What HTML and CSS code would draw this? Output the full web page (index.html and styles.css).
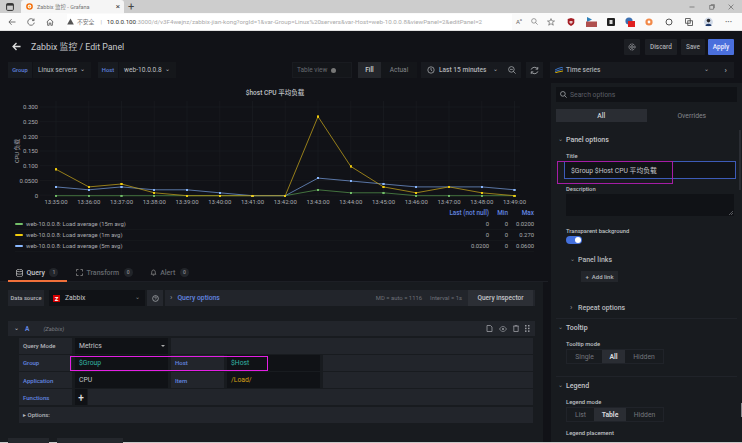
FILE: index.html
```html
<!DOCTYPE html>
<html lang="zh">
<head>
<meta charset="utf-8">
<title>Zabbix 监控 - Grafana</title>
<link rel="stylesheet" href="styles.css">
</head>
<body>
<div class="tabstrip">
  <svg class="winicon" width="8" height="8" viewBox="0 0 8 8"><rect x=".6" y=".6" width="6.8" height="6.8" rx="1" fill="none" stroke="#333" stroke-width="1"/><rect x=".6" y=".6" width="6.8" height="2" fill="#333"/></svg>
  <div class="tab">
    <svg width="7" height="7" viewBox="0 0 8 8"><circle cx="4" cy="4" r="3" fill="none" stroke="#f46800" stroke-width="1.6"/><circle cx="4" cy="4" r="1" fill="#fbb03b"/></svg>
    <span class="tabtitle">Zabbix 监控 - Grafana</span>
    <span class="tabclose">×</span>
  </div>
  <span class="tabplus">+</span>
  <div class="winctl">
    <svg width="6" height="6" viewBox="0 0 6 6"><path d="M.5 3h5" stroke="#666" stroke-width=".7"/></svg>
    <svg width="6" height="6" viewBox="0 0 6 6"><rect x=".8" y="1.500" width="3.700" height="3.700" fill="none" stroke="#666" stroke-width=".7"/><path d="M1.800.6H5.400V4.200" fill="none" stroke="#666" stroke-width=".7"/></svg>
    <svg width="6" height="6" viewBox="0 0 6 6"><path d="M.6.6l4.800 4.800M5.400.6L.6 5.400" stroke="#666" stroke-width=".7"/></svg>
  </div>
</div>
<div class="addr">
  <svg width="8" height="8" viewBox="0 0 8 8" class="navico"><path d="M7.5 4H1M3.6 1.2L.9 4l2.7 2.8" fill="none" stroke="#555" stroke-width=".8"/></svg>
  <svg width="8" height="8" viewBox="0 0 8 8" class="navico"><path d="M6.9 2.3A3.3 3.3 0 1 0 7.3 4.6M7 .6v2H5" fill="none" stroke="#555" stroke-width=".8"/></svg>
  <svg width="8" height="8" viewBox="0 0 8 8" class="navico"><path d="M.7 4L4 1l3.3 3M1.6 3.5V7.3H3.2V5H4.8V7.3H6.4V3.5" fill="none" stroke="#555" stroke-width=".8"/></svg>
  <div class="urlbar">
    <svg width="7" height="7" viewBox="0 0 8 8"><path d="M4 .5L7.8 7.5H.2z" fill="#555"/></svg>
    <span class="insecure">不安全</span><span class="sep">|</span>
    <span class="url"><b>10.0.0.100</b>:3000/d/v3F4wejnz/zabbix-jian-kong?orgId=1&amp;var-Group=Linux%20servers&amp;var-Host=web-10.0.0.8&amp;viewPanel=2&amp;editPanel=2</span>
  </div>
  <div class="exts">
    <span class="ext-t">A<sup>a</sup></span>
    <svg width="7" height="7" viewBox="0 0 8 8"><circle cx="3.3" cy="3.3" r="2.6" fill="none" stroke="#666" stroke-width=".7"/><path d="M5.2 5.2L7.6 7.6" stroke="#666" stroke-width=".7"/></svg>
    <svg width="8" height="8" viewBox="0 0 8 8"><path d="M4 .6L5 3h2.5L5.5 4.6l.8 2.6L4 5.7 1.7 7.2l.8-2.6L.5 3H3z" fill="none" stroke="#666" stroke-width=".7"/></svg>
    <svg width="8" height="8" viewBox="0 0 8 8"><path d="M.7 1L4 0l3.3 1v3.3C7.3 6 5.6 7.4 4 8 2.4 7.4.7 6 .7 4.3z" fill="#a41d24"/><path d="M2.500 3h3v1.500L4 6 2.500 4.500z" fill="#e8c7c7"/></svg>
    <svg width="11" height="10" viewBox="0 0 11 10"><path d="M1 0L6 2.500 1 5z" fill="#2d7fb8"/><rect x="0" y="4.500" width="11" height="5.500" fill="#b0504f"/></svg>
    <svg width="8" height="8" viewBox="0 0 8 8"><rect width="8" height="8" rx="1" fill="#222"/><rect x="2.5" y="2" width="3" height="4" fill="#ddd"/></svg>
    <svg width="10" height="10" viewBox="0 0 10 10"><circle cx="4" cy="4" r="3.6" fill="#3c6fb0"/><rect x="3" y="4" width="7" height="6" fill="#e02020"/></svg>
    <svg width="8" height="8" viewBox="0 0 8 8"><circle cx="4" cy="4" r="3.6" fill="#f28a4a"/><circle cx="4" cy="4" r="1.4" fill="#fff"/></svg>
    <svg width="8" height="8" viewBox="0 0 8 8"><circle cx="4" cy="4" r="3" fill="none" stroke="#444" stroke-width=".9"/></svg>
    <svg width="8" height="8" viewBox="0 0 8 8"><rect x=".6" y=".6" width="4.6" height="4.6" fill="none" stroke="#444" stroke-width=".8"/><rect x="2.8" y="2.8" width="4.6" height="4.6" fill="none" stroke="#444" stroke-width=".8"/></svg>
    <svg width="9" height="10" viewBox="0 0 9 10"><circle cx="4.5" cy="5" r="4.4" fill="#cfd8e6"/><circle cx="4.5" cy="3.6" r="1.8" fill="#2a2a2e"/><path d="M1.5 9c0-3 6-3 6 0z" fill="#1f3a6b"/></svg>
    <span class="ext-t dots">···</span>
  </div>
</div>

<div class="app">
  <header class="nav">
    <svg class="back" width="9" height="9" viewBox="0 0 10 10"><path d="M9.5 5H1.5M5 1.2L1.2 5 5 8.8" fill="none" stroke="#ddd" stroke-width="1.5"/></svg>
    <h1 class="pagetitle">Zabbix 监控 / Edit Panel</h1>
    <div class="navbtns">
      <button class="btn btn-ico"><svg width="8" height="8" viewBox="0 0 8 8"><circle cx="4" cy="4" r="1.3" fill="none" stroke="#b5b7bc" stroke-width=".7"/><circle cx="4" cy="4" r="3" fill="none" stroke="#b5b7bc" stroke-width=".9" stroke-dasharray="1.2 .7"/></svg></button>
      <button class="btn btn-discard">Discard</button>
      <button class="btn btn-save">Save</button>
      <button class="btn btn-apply">Apply</button>
    </div>
  </header>

  <div class="toolbar">
    <span class="varlabel vl-group">Group</span>
    <span class="varval vv-group">Linux servers <i class="chev">⌄</i></span>
    <span class="varlabel vl-host">Host</span>
    <span class="varval vv-host">web-10.0.0.8 <i class="chev">⌄</i></span>
    <div class="tableview">Table view <i class="knob"></i></div>
    <div class="fillgroup"><span class="fill">Fill</span><span class="actual">Actual</span></div>
    <div class="timepick">
      <svg width="8" height="8" viewBox="0 0 8 8"><circle cx="4" cy="4" r="3.2" fill="none" stroke="#b5b7bc" stroke-width=".7"/><path d="M4 2v2l1.3 1" fill="none" stroke="#b5b7bc" stroke-width=".7"/></svg>
      <span class="timetext">Last 15 minutes</span><i class="chev">⌄</i>
      <svg class="zoomout" width="8" height="8" viewBox="0 0 8 8"><circle cx="3.4" cy="3.4" r="2.8" fill="none" stroke="#b5b7bc" stroke-width=".7"/><path d="M5.4 5.4L7.6 7.6M2 3.4h2.8" stroke="#b5b7bc" stroke-width=".7"/></svg>
    </div>
    <div class="refresh"><svg width="9" height="9" viewBox="0 0 8 8"><path d="M1 3.2A3.2 3.2 0 0 1 6.7 2.6M7 4.8A3.2 3.2 0 0 1 1.3 5.4M6.9 .9v1.9H5M1.1 7.1V5.2H3" fill="none" stroke="#b5b7bc" stroke-width=".7"/></svg></div>
    <div class="vizpick">
      <svg width="8" height="6" viewBox="0 0 8 6"><path d="M0 3l3-1.5L8 0M0 4.5l3-1L8 2" fill="none" stroke="#3f7fd9" stroke-width=".9"/><path d="M0 6l3-1 5-1" fill="none" stroke="#e0b400" stroke-width=".9"/></svg>
      <span class="viztext">Time series</span><i class="chev vizchev">⌄</i><span class="vizarrow">›</span>
    </div>
  </div>

  <div class="body">
    <main class="left">
      <section class="chart">
        <h2 class="charttitle">$host CPU 平均负载</h2>
        <svg class="plot" width="546" height="112" viewBox="0 97 546 112">
          <defs>
            <marker id="mg" markerWidth="2.400" markerHeight="2.400" refX="1.200" refY="1.200" markerUnits="userSpaceOnUse"><rect width="2.400" height="2.400" fill="#73bf69"/></marker>
            <marker id="my" markerWidth="2.400" markerHeight="2.400" refX="1.200" refY="1.200" markerUnits="userSpaceOnUse"><rect width="2.400" height="2.400" fill="#f2cc0c"/></marker>
            <marker id="mb" markerWidth="2.400" markerHeight="2.400" refX="1.200" refY="1.200" markerUnits="userSpaceOnUse"><rect width="2.400" height="2.400" fill="#8ab8ff"/></marker>
          </defs>
          <g class="grid">
            <path d="M40 107H520M40 121.7H520M40 136.4H520M40 151H520M40 165.7H520M40 180.4H520M40 195.1H520"/>
            <path d="M56 101V196M88.75 101V196M121.5 101V196M154.25 101V196M187 101V196M219.75 101V196M252.5 101V196M285.25 101V196M318 101V196M350.75 101V196M383.5 101V196M416.25 101V196M449 101V196M481.75 101V196M514.5 101V196"/>
          </g>
          <g class="ylab">
            <text x="38" y="109">0.300</text><text x="38" y="124">0.250</text><text x="38" y="138.5">0.200</text><text x="38" y="153">0.150</text><text x="38" y="168">0.100</text><text x="38" y="182.7">0.0500</text><text x="38" y="197.5">0</text>
          </g>
          <text class="ytitle" transform="translate(19 151) rotate(-90)">CPU 负载</text>
          <g class="xlab">
            <text x="56" y="204">13:35:00</text><text x="88.75" y="204">13:36:00</text><text x="121.5" y="204">13:37:00</text><text x="154.25" y="204">13:38:00</text><text x="187" y="204">13:39:00</text><text x="219.75" y="204">13:40:00</text><text x="252.5" y="204">13:41:00</text><text x="285.25" y="204">13:42:00</text><text x="318" y="204">13:43:00</text><text x="350.75" y="204">13:44:00</text><text x="383.5" y="204">13:45:00</text><text x="416.25" y="204">13:46:00</text><text x="449" y="204">13:47:00</text><text x="481.75" y="204">13:48:00</text><text x="514.5" y="204">13:49:00</text>
          </g>
          <polyline class="ser sg" points="56,195.7 88.75,195.7 121.5,195.7 154.25,195.7 187,195.7 219.75,195.7 252.5,195.7 285.25,195.7 318,189.8 350.75,192.8 383.5,192.8 416.25,195.7 449,195.7 481.75,195.7 514.5,195.7"/>
          <polyline class="ser sb" points="56,186.9 88.75,189.8 121.5,186.9 154.25,189.8 187,189.8 219.75,192.8 252.5,195.7 285.25,195.7 318,178.1 350.75,181 383.5,184 416.25,186.9 449,186.9 481.75,186.9 514.5,189.8"/>
          <polyline class="ser sy" points="56,169.3 88.75,186.9 121.5,184 154.25,192.8 187,195.7 219.75,195.7 252.5,195.7 285.25,195.7 318,116.6 350.75,166.4 383.5,186.9 416.25,192.8 449,186.9 481.75,192.8 514.5,195.7"/>
        </svg>
        <div class="legend">
          <div class="lrow lhead"><span class="lname"></span><span class="lv1">Last (not null)</span><span class="lv2">Min</span><span class="lv3">Max</span></div>
          <div class="lrow"><span class="lname"><i class="sw sw-g"></i>web-10.0.0.8: Load average (15m avg)</span><span class="lv1">0</span><span class="lv2">0</span><span class="lv3">0.0200</span></div>
          <div class="lrow"><span class="lname"><i class="sw sw-y"></i>web-10.0.0.8: Load average (1m avg)</span><span class="lv1">0</span><span class="lv2">0</span><span class="lv3">0.270</span></div>
          <div class="lrow"><span class="lname"><i class="sw sw-b"></i>web-10.0.0.8: Load average (5m avg)</span><span class="lv1">0.0200</span><span class="lv2">0</span><span class="lv3">0.0600</span></div>
        </div>
      </section>

      <nav class="qtabs">
        <div class="qtab active">
          <svg width="7" height="8" viewBox="0 0 7 8"><ellipse cx="3.5" cy="1.5" rx="3" ry="1.2" fill="none" stroke="#ccc" stroke-width=".7"/><path d="M.5 1.5v5c0 1.6 6 1.6 6 0v-5M.5 4c0 1.6 6 1.6 6 0" fill="none" stroke="#ccc" stroke-width=".7"/></svg>
          <span>Query</span><em>1</em>
        </div>
        <div class="qtab">
          <svg width="7" height="7" viewBox="0 0 7 7"><path d="M.5 2.5V.5H2.5M4.5.5H6.5V2.5M6.5 4.5V6.5H4.5M2.5 6.5H.5V4.5" fill="none" stroke="#888" stroke-width=".8"/></svg>
          <span>Transform</span><em>0</em>
        </div>
        <div class="qtab">
          <svg width="7" height="7" viewBox="0 0 7 7"><path d="M1 5.2c.8-.8.6-1.6.8-2.6C2 1.500 2.700 1 3.500 1s1.500.5 1.700 1.600c.2 1 0 1.800.8 2.600zM2.800 6.200h1.400" fill="none" stroke="#888" stroke-width=".8"/></svg>
          <span>Alert</span><em>0</em>
        </div>
      </nav>

      <section class="qpanel">
        <div class="dsrow">
          <span class="dslabel">Data source</span>
          <div class="dsselect"><i class="zlogo">Z</i><span>Zabbix</span><i class="chev dschev">⌄</i></div>
          <button class="dshelp"><svg width="7" height="7" viewBox="0 0 8 8"><circle cx="4" cy="4" r="3.3" fill="none" stroke="#b5b7bc" stroke-width=".8"/><path d="M3 3.200C3 2 5 2 5 3.200 5 4 4 4 4 5" fill="none" stroke="#b5b7bc" stroke-width=".7"/></svg></button>
          <div class="qoptions"><i class="arrow">›</i><span class="qotitle">Query options</span><span class="qometa">MD = auto = 1116</span><span class="qometa qoint">Interval = 1s</span><button class="qinspect">Query inspector</button></div>
        </div>

        <div class="qhead">
          <i class="chev">⌄</i><span class="qa">A</span><span class="qds">(Zabbix)</span>
          <div class="qicons">
            <svg width="7" height="7" viewBox="0 0 7 7"><path d="M1 .5H4.500L6 2V6.500H1z" fill="none" stroke="#9a9ca2" stroke-width=".8"/></svg>
            <svg width="8" height="6" viewBox="0 0 8 6"><path d="M.5 3C2.500-.3 5.500-.3 7.500 3 5.500 6.300 2.500 6.300.5 3z" fill="none" stroke="#9a9ca2" stroke-width=".7"/><circle cx="4" cy="3" r="1" fill="#9a9ca2"/></svg>
            <svg width="6" height="7" viewBox="0 0 6 7"><path d="M.8 1.500V6.500H5.200V1.500M0 1.200H6M2 1V.3H4V1" fill="none" stroke="#9a9ca2" stroke-width=".8"/></svg>
            <svg width="5" height="7" viewBox="0 0 5 7"><g fill="#9a9ca2"><rect width="1.500" height="1.500"/><rect x="3" width="1.500" height="1.500"/><rect y="2.700" width="1.500" height="1.500"/><rect x="3" y="2.700" width="1.500" height="1.500"/><rect y="5.400" width="1.500" height="1.500"/><rect x="3" y="5.400" width="1.500" height="1.500"/></g></svg>
          </div>
        </div>
        <div class="qrows">
          <div class="qrow">
            <span class="qlab qlab-plain">Query Mode</span>
            <span class="qfield">Metrics<i class="caret"></i></span>
            <span class="qfill"></span>
          </div>
          <div class="qrow">
            <span class="qlab">Group</span>
            <span class="qfield var">$Group</span>
            <span class="qlab qlab2">Host</span>
            <span class="qfield var">$Host</span>
            <span class="qfill"></span>
          </div>
          <div class="qrow">
            <span class="qlab">Application</span>
            <span class="qfield">CPU</span>
            <span class="qlab qlab2">Item</span>
            <span class="qfield rgx">/Load/</span>
            <span class="qfill"></span>
          </div>
          <div class="qrow">
            <span class="qlab">Functions</span>
            <span class="qplus">+</span>
            <span class="qfill"></span>
          </div>
          <div class="qrow qoptrow">▸ Options:</div>
          <i class="pinkbox pink-query"></i>
        </div>
        <div class="qbtns"><button class="qbtn b1"></button><button class="qbtn b2"></button></div>
      </section>
    </main>

    <aside class="right">
      <div class="search">
        <svg width="7" height="7" viewBox="0 0 8 8"><circle cx="3.300" cy="3.300" r="2.700" fill="none" stroke="#b5b7bc" stroke-width=".8"/><path d="M5.300 5.300L7.600 7.600" stroke="#b5b7bc" stroke-width=".8"/></svg>
        <span>Search options</span>
      </div>
      <div class="opttabs"><span class="on">All</span><span>Overrides</span></div>

      <div class="sect-h first"><i class="chev">⌄</i>Panel options</div>
      <div class="fieldlab">Title</div>
      <div class="titleinput">$Group $Host CPU 平均负载</div>
      <i class="pinkbox pink-title"></i>
      <div class="fieldlab desc">Description</div>
      <div class="textarea"><svg class="grip" width="4" height="4" viewBox="0 0 4 4"><path d="M0 4L4 0M2 4L4 2" stroke="#9a9ca2" stroke-width=".5"/></svg></div>
      <div class="fieldlab transp">Transparent background</div>
      <div class="toggle"><i></i></div>
      <div class="sub-h"><i class="chev">⌄</i>Panel links</div>
      <div class="addlink">+ <span>Add link</span></div>
      <div class="sub-h repeat"><i class="arrow">›</i>Repeat options</div>
      <hr class="divider">

      <div class="sect-h"><i class="chev">⌄</i>Tooltip</div>
      <div class="fieldlab sm">Tooltip mode</div>
      <div class="radio r-tip"><span>Single</span><span class="on">All</span><span>Hidden</span></div>
      <hr class="divider d2">

      <div class="sect-h"><i class="chev">⌄</i>Legend</div>
      <div class="fieldlab sm">Legend mode</div>
      <div class="radio r-leg"><span>List</span><span class="on">Table</span><span>Hidden</span></div>
      <div class="fieldlab place">Legend placement</div>
      <i class="scroll"></i>
      <i class="scroll2"></i>
    </aside>
  </div>
</div>
<div class="bottomline"></div>
</body>
</html>
```
FILE: styles.css
```css
* { box-sizing: border-box; }
html, body { margin: 0; padding: 0; width: 742px; height: 443px; overflow: hidden; background: #111217; }
body { font-family: Roboto, "Noto Sans CJK SC", sans-serif; font-size: 6.5px; color: #c7c8cc; display: flex; flex-direction: column; }
button { font-family: inherit; border: 0; padding: 0; }
i, em { font-style: normal; }
h1, h2 { margin: 0; font-weight: 400; }
.chev { font-size: 6px; line-height: 1; display: inline-block; transform: translateY(-1px); }

/* browser chrome */
.tabstrip { height: 13px; background: #cdcdcd; display: flex; align-items: center; flex: none; color: #333; }
.winicon { margin-left: 6px; margin-right: 7px; }
.tab { width: 103px; height: 13px; background: #f5f5f5; border-radius: 3px 3px 0 0; display: flex; align-items: center; padding-left: 5px; gap: 4px; font-size: 5.500px; color: #777; }
.tabtitle { flex: 1; }
.tabclose { font-size: 8px; color: #444; margin-right: 4px; }
.tabplus { font-size: 11px; margin-left: 4px; color: #444; }
.winctl { margin-left: auto; margin-right: 1px; display: grid; grid-template-columns: repeat(3, 19.500px); justify-items: center; align-items: center; }
.addr { height: 18px; background: #fafafa; display: flex; align-items: center; flex: none; padding-left: 8px; border-bottom: 1px solid #e0e0e0; }
.navico { margin-right: 11px; }
.urlbar { width: 444.500px; height: 16px; display: flex; align-items: center; margin-left: 2px; font-size: 5.800px; background: #fff; gap: 2px; color: #999; white-space: nowrap; overflow: hidden; }
.insecure { color: #777; margin-left: 1px; }
.sep { margin: 0 3px 0 4px; color: #aaa; }
.url { color: #aaa; font-size: 6.200px; }
.url b { font-weight: 400; color: #333; }
.exts { display: grid; grid-template-columns: 15px 15px 19px 21px 20px 19px 19px 19px 20px 20px 20px 20px; justify-items: center; align-items: center; }
.ext-t { font-size: 6px; color: #666; }
.ext-t sup { font-size: 4px; line-height: 0; }
.dots { font-size: 8px; font-weight: 700; }

/* app */
.app { height: 411px; flex: none; display: flex; flex-direction: column; background: #111217; position: relative; }
.nav { height: 31px; display: flex; align-items: center; padding-left: 12px; flex: none; }
.back { margin-right: 10px; }
.pagetitle { font-size: 8.800px; color: #c9cacd; white-space: nowrap; }
.navbtns { margin-left: auto; display: flex; align-items: center; margin-right: 8px; }
.btn { height: 16px; background: #1c1e23; color: #a9abb0; font-size: 6.500px; font-weight: 500; border-radius: 1px; }
.btn-ico { width: 16px; display: flex; align-items: center; justify-content: center; margin-right: 5px; }
.btn-discard { width: 32px; margin-right: 4px; }
.btn-save { width: 24px; margin-right: 3px; }
.btn-apply { width: 26px; background: #4a6fdc; color: #eef; }

.toolbar { height: 16px; display: flex; align-items: stretch; padding-left: 8px; flex: none; font-size: 6.500px; }
.varlabel { background: #181b20; color: #5f82df; font-size: 5.800px; font-weight: 500; display: flex; align-items: center; justify-content: center; }
.vl-group { width: 24px; }
.vl-host { width: 20px; margin-left: 7px; }
.varval { background: #15171b; display: flex; align-items: center; gap: 3px; white-space: nowrap; font-size: 6.600px; color: #bfc0c4; }
.vv-group { width: 58px; padding-left: 5px; margin-left: 1px; }
.vv-host { width: 57px; padding-left: 5px; margin-left: 1px; }
.tableview { width: 60px; margin-left: 116px; background: #14161a; border: 1px solid #191b20; display: flex; align-items: center; padding-left: 4px; gap: 4px; color: #666970; font-size: 6.500px; }
.knob { width: 5px; height: 5px; border-radius: 50%; background: #777; display: block; }
.fillgroup { margin-left: 6px; width: 59px; background: #14161a; display: flex; align-items: center; }
.fill { width: 23px; height: 16px; background: #24262b; display: flex; align-items: center; justify-content: center; color: #cdced1; font-weight: 500; }
.actual { width: 36px; text-align: center; color: #85878c; }
.timepick { margin-left: 4px; width: 100px; background: #181a1f; display: flex; align-items: center; padding-left: 6px; gap: 4px; color: #b0b2b7; font-weight: 500; font-size: 6.600px; }
.timetext { white-space: nowrap; }
.timepick .chev { margin-left: 3px; }
.zoomout { margin-left: 6px; }
.refresh { margin-left: 5px; width: 17px; background: #181a1f; display: flex; align-items: center; justify-content: center; }
.vizpick { margin-left: 7px; width: 184px; background: #181a1f; display: flex; align-items: center; padding-left: 5px; gap: 3px; color: #a9abb0; font-weight: 500; font-size: 6.600px; }
.viztext { flex: 1; }
.vizchev { margin-right: 13px; }
.vizarrow { margin-right: 7px; font-size: 8px; }

.body { flex: 1; display: flex; min-height: 0; }
.left { width: 548px; display: flex; flex-direction: column; flex: none; }
.chart { height: 184px; flex: none; padding-top: 11px; }
.charttitle { font-size: 6.500px; font-weight: 500; text-align: center; color: #bfc0c4; line-height: 8px; height: 8px; width: 550px; }
.plot { display: block; }
.grid path { stroke: #1c1e24; stroke-width: .6; fill: none; }
.ylab text { font-size: 6px; fill: #a8aaaf; text-anchor: end; font-family: Roboto, sans-serif; }
.xlab text { font-size: 6px; fill: #a8aaaf; text-anchor: middle; font-family: Roboto, sans-serif; }
.ytitle { font-size: 5.800px; fill: #a8aaaf; text-anchor: middle; font-family: Roboto, "Noto Sans CJK SC", sans-serif; }
.ser { fill: none; stroke-width: .8; }
.sg { stroke: #4f8a47; marker-start: url(#mg); marker-mid: url(#mg); marker-end: url(#mg); }
.sb { stroke: #6c8fc9; marker-start: url(#mb); marker-mid: url(#mb); marker-end: url(#mb); }
.sy { stroke: #b8991a; marker-start: url(#my); marker-mid: url(#my); marker-end: url(#my); }

.legend { padding-left: 15px; padding-right: 14px; margin-top: -2.500px; }
.lrow { height: 11px; display: flex; align-items: center; font-size: 5.900px; color: #aaacb1; border-bottom: 1px solid #15171b; }
.lhead { color: #6285e0; font-weight: 500; font-size: 6.400px; border: 0; height: 12px; }
.lname { flex: 1; display: flex; align-items: center; gap: 3.500px; white-space: nowrap; }
.lv1 { width: 80px; text-align: right; }
.lv2 { width: 19px; text-align: right; }
.lv3 { width: 26px; text-align: right; }
.sw { display: block; width: 7.500px; height: 2px; border-radius: 1px; flex: none; }
.sw-g { background: #73bf69; }
.sw-y { background: #f2cc0c; }
.sw-b { background: #8ab8ff; }

.qtabs { height: 20px; display: flex; flex: none; padding: 2px 0 0 8px; border-bottom: 1px solid #1d1f25; }
.qtab { display: flex; align-items: center; gap: 3.500px; padding: 0 8px; color: #666a70; font-size: 7px; font-weight: 500; margin-right: 1px; position: relative; }
.qtab.active { color: #c5c6ca; width: 59px; }
.qtab.active::after { content: ""; position: absolute; left: 0; right: 0; bottom: -1px; height: 2px; background: #f0703a; }
.qtab em { width: 9px; height: 9px; border-radius: 50%; background: #22252a; text-align: center; font-size: 5px; line-height: 9px; color: #8a8c91; margin-left: 1px; }

.qpanel { flex: 1; background: #181b1f; width: 543px; padding: 8px 8px 0; display: flex; flex-direction: column; min-height: 0; }
.dsrow { display: flex; height: 16px; flex: none; }
.dslabel { width: 36px; background: #22252b; font-size: 5.800px; font-weight: 500; display: flex; align-items: center; justify-content: center; color: #b5b7bc; }
.dsselect { width: 96px; margin-left: 5px; background: #101216; display: flex; align-items: center; padding-left: 4px; gap: 5px; color: #c5c6ca; font-size: 6.800px; }
.zlogo { width: 7px; height: 7px; background: #d40000; color: #fff; font-size: 6px; font-weight: 700; text-align: center; line-height: 7px; display: block; }
.dsselect span { flex: 1; }
.dschev { margin-right: 5px; color: #888; }
.dshelp { width: 16px; margin-left: 2px; background: #25282e; display: flex; align-items: center; justify-content: center; }
.qoptions { flex: 1; margin-left: 2px; background: #22252b; display: flex; align-items: center; padding-left: 5px; }
.arrow { font-size: 8px; line-height: 1; color: #9a9ca2; }
.qotitle { margin-left: 5px; color: #6285e0; font-weight: 500; font-size: 6.800px; flex: 1; }
.qometa { color: #6e7077; font-size: 5.900px; white-space: nowrap; }
.qoint { margin-left: 8px; }
.qinspect { margin-left: 6px; width: 65px; height: 16px; background: #2c2f35; color: #c5c6ca; font-size: 6.500px; font-weight: 500; margin-right: 2px; }
.qhead { height: 15px; margin-top: 15px; background: #22252b; display: flex; align-items: center; padding-left: 6px; flex: none; width: 527px; }
.qa { color: #6285e0; font-weight: 700; font-size: 6.500px; margin-left: 6px; }
.qds { margin-left: 14px; font-style: italic; color: #777a80; font-size: 5.800px; }
.qicons { margin-left: auto; display: flex; align-items: center; gap: 6px; margin-right: 5px; }
.qrows { position: relative; margin-left: 11px; width: 514px; flex: none; display: flex; flex-direction: column; gap: 1.250px; margin-top: 1.500px; }
.qrow { height: 16px; display: flex; gap: 3px; background: #181b1f; font-size: 6.800px; }
.qlab { width: 53px; background: #22252b; color: #6285e0; font-size: 6px; font-weight: 500; display: flex; align-items: center; padding-left: 4px; }
.qlab-plain { color: #b5b7bc; }
.qlab2 { padding-left: 4px; }
.qfield { width: 93px; background: #101216; display: flex; align-items: center; padding-left: 4px; color: #c5c6ca; position: relative; }
.var { color: #33b5a5; }
.rgx { color: #d6a218; }
.caret { position: absolute; right: 3px; top: 7px; border: 2px solid transparent; border-top: 2.500px solid #aaa; }
.qfill { flex: 1; background: #22252b; }
.qplus { width: 12px; background: #101216; color: #e0e0e0; font-size: 10px; font-weight: 500; display: flex; align-items: center; justify-content: center; margin-right: -2px; }
.qoptrow { background: #22252b; align-items: center; padding-left: 4px; color: #b5b7bc; font-size: 6px; font-weight: 500; }
.pinkbox { position: absolute; border: 1px solid #e31fe3; display: block; pointer-events: none; }
.pink-query { left: 51px; top: 18px; width: 198px; height: 15.500px; }
.qbtns { display: flex; gap: 8px; margin-top: 15px; }
.qbtn { height: 10px; background: #24272c; }
.b1 { width: 41px; }
.b2 { width: 66px; }

.right { flex: 1; background: #181b1f; margin: 5px 0 0 3px; padding: 4px 5px 0 5px; position: relative; display: flex; flex-direction: column; }
.search { height: 15px; background: #101216; display: flex; align-items: center; gap: 3px; padding-left: 4px; color: #5c5f66; font-size: 6.800px; flex: none; }
.opttabs { display: flex; height: 13px; margin-top: 7px; flex: none; font-size: 6.800px; }
.opttabs span { flex: 1; display: flex; align-items: center; justify-content: center; color: #85878c; }
.opttabs .on { background: #2a2d33; color: #d0d1d4; font-weight: 500; }
.sect-h { height: 10px; margin-top: 8px; display: flex; align-items: center; gap: 4px; font-weight: 500; font-size: 7px; color: #c5c6ca; padding-left: 2px; flex: none; }
.sect-h .chev { color: #888; width: 4px; }
.sect-h.first { margin-top: 13px; }
.fieldlab { font-size: 5.800px; font-weight: 500; color: #bfc0c4; margin-left: 10px; height: 8px; line-height: 8px; margin-top: 7px; flex: none; white-space: nowrap; }
.fieldlab.sm { margin-top: 7px; }
.titleinput { height: 18px; margin: 1px 1px 0 8px; border: 1px solid #3d5bb8; background: #101216; display: flex; align-items: center; padding: 0 0 1px 6px; color: #c5c6ca; font-size: 6.800px; flex: none; }
.pink-title { left: 6px; top: 78px; width: 116px; height: 22.500px; border-color: #a51da5; }
.fieldlab.desc { margin-top: 6px; }
.textarea { height: 22px; margin: 1px 3px 0 10px; background: #101216; flex: none; position: relative; }
.grip { position: absolute; right: 1px; bottom: 1px; }
.fieldlab.transp { margin-top: 11px; }
.toggle { width: 16px; height: 8px; margin: 1px 0 0 10px; background: #4470dc; border-radius: 4px; position: relative; flex: none; }
.toggle i { position: absolute; right: 1px; top: 1px; width: 6px; height: 6px; border-radius: 50%; background: #fff; display: block; }
.sub-h { display: flex; align-items: center; gap: 3px; font-weight: 500; font-size: 7px; color: #b9bbbf; margin: 11px 0 0 14px; height: 10px; flex: none; }
.sub-h .chev, .sub-h .arrow { width: 5px; color: #888; }
.addlink { width: 37px; height: 11px; margin: 6px 0 0 25px; background: #23262b; display: flex; align-items: center; justify-content: center; gap: 3px; font-size: 6px; font-weight: 500; color: #b5b7bc; flex: none; }
.sub-h.repeat { margin-top: 21px; }
.divider { width: 100%; height: 1px; border: 0; background: #202329; margin: 5px 0 0; flex: none; }
.divider + .sect-h { margin-top: 4px; }
.radio { display: flex; height: 15px; margin: 1px 0 0 10px; border: 1px solid #202329; width: 98px; font-size: 6.800px; align-items: stretch; flex: none; }
.radio span { display: flex; align-items: center; justify-content: center; color: #74767c; }
.radio .on { background: #2a2d33; color: #d8d9dc; font-weight: 700; }
.r-tip span:nth-child(1) { width: 35px; }
.r-tip span:nth-child(2) { width: 23px; }
.r-tip span:nth-child(3) { width: 38px; }
.r-leg span:nth-child(1) { width: 27px; }
.r-leg span:nth-child(2) { width: 32px; }
.r-leg span:nth-child(3) { width: 37px; }
.d2 { margin-top: 12px; }
.fieldlab.place { margin-top: 7px; }
.scroll { position: absolute; right: 1px; top: 47px; width: 2px; height: 60px; background: #2a2d33; display: block; }
.scroll2 { position: absolute; right: 0; top: 320px; width: 1px; height: 14px; background: #8a8c91; display: block; }
.bottomline { height: 1px; background: #c8c8c8; flex: none; }
```
